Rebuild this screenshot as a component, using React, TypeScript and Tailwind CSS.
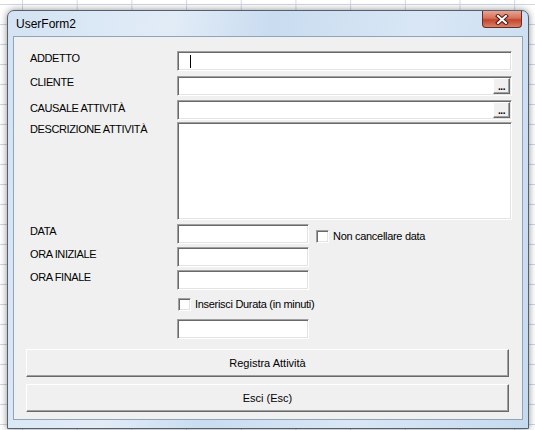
import React from 'react';

// 3D edges used by the form controls
const sunken =
  'border border-t-[#a0a0a0] border-l-[#a0a0a0] border-b-white border-r-white shadow-[inset_1px_1px_0_#696969,inset_-1px_-1px_0_#e3e3e3] bg-white';
const raised =
  'border border-t-white border-l-white border-b-[#696969] border-r-[#696969] shadow-[inset_-1px_-1px_0_#a0a0a0] bg-[#f0f0f0]';

const font = "font-['Liberation_Sans',Arial,sans-serif]";

const Label: React.FC<{ text: string; pt: string }> = ({ text, pt }) => (
  <div className={`w-[163px] shrink-0 pl-[16px] text-[11px] leading-[13px] tracking-[-0.4px] text-black ${pt}`}>
    {text}
  </div>
);

const TextBox: React.FC<{ w?: string; h?: string; caret?: boolean; browse?: boolean }> = ({
  w = 'w-[335px]',
  h = 'h-[20px]',
  caret,
  browse,
}) => (
  <div className={`${sunken} ${w} ${h} flex p-[1px] justify-between`}>
    {caret ? <div className="ml-[11px] mt-[2px] w-px h-[13px] bg-black" /> : <div />}
    {browse && (
      <div className={`${raised} w-[17px] h-[16px] flex items-end justify-center pb-[1px] text-[10px] font-bold leading-none tracking-[-0.5px]`}>
        ...
      </div>
    )}
  </div>
);

const CheckBox: React.FC<{ text: string }> = ({ text }) => (
  <div className="flex items-center gap-[4px]">
    <div className={`${sunken} w-[13px] h-[13px]`} />
    <span className="text-[11px] leading-[13px] tracking-[-0.3px] text-black">{text}</span>
  </div>
);

const CloseGlyph = () => (
  <svg width="14" height="11" viewBox="0 0 14 11">
    <path d="M3 2 L11 9 M11 2 L3 9" stroke="#4a1a14" strokeWidth="4" strokeLinecap="square" />
    <path d="M3 2 L11 9 M11 2 L3 9" stroke="#ffffff" strokeWidth="2" strokeLinecap="square" />
  </svg>
);

export default function App() {
  return (
    <div
      className={`${font} w-[535px] h-[430px] overflow-hidden bg-white bg-[linear-gradient(to_right,#d0d7e5_1px,transparent_1px),linear-gradient(to_bottom,#d0d7e5_1px,transparent_1px)] bg-[size:54.7px_20px] bg-[position:22px_4px] pt-[10px] pl-[7px]`}
    >
      {/* window frame */}
      <div className="w-[522px] h-[419px] rounded-t-[7px] border border-[#55606e] shadow-[0_0_7px_rgba(0,0,0,0.45)] bg-[linear-gradient(100deg,#d3e3f3_0%,#e2ecf7_28%,#c9dcf0_45%,#d9e7f5_70%,#c6daef_100%)] flex flex-col">
        <div className="h-[25px] shrink-0 flex items-center justify-between pl-[8px] pr-[6px]">
          <span className="text-[12px] text-black leading-none">UserForm2</span>
          <div className="self-start w-[40px] h-[17px] rounded-b-[4px] border border-t-0 border-[#6b2a22] bg-[linear-gradient(to_bottom,#e8a493_0%,#d6705a_45%,#c4452c_55%,#d8806a_100%)] flex items-center justify-center">
            <CloseGlyph />
          </div>
        </div>

        {/* client area */}
        <div className="mx-[5px] mb-[8px] flex-1 border border-[#8fa3ba] bg-[#f0f0f0] flex flex-col">
          <div className="flex mt-[14px]">
            <Label text="ADDETTO" pt="pt-[1px]" />
            <TextBox caret />
          </div>
          <div className="flex mt-[5px]">
            <Label text="CLIENTE" pt="pt-0" />
            <TextBox browse />
          </div>
          <div className="flex mt-[4px]">
            <Label text="CAUSALE ATTIVITÀ" pt="pt-[2px]" />
            <TextBox browse />
          </div>
          <div className="flex mt-[2px]">
            <Label text="DESCRIZIONE ATTIVITÀ" pt="pt-[1px]" />
            <TextBox h="h-[98px]" />
          </div>
          <div className="flex mt-[4px]">
            <Label text="DATA" pt="pt-[1px]" />
            <TextBox w="w-[132px]" />
            <div className="ml-[7px] mt-[6px]">
              <CheckBox text="Non cancellare data" />
            </div>
          </div>
          <div className="flex mt-[3px]">
            <Label text="ORA INIZIALE" pt="pt-[1px]" />
            <TextBox w="w-[132px]" />
          </div>
          <div className="flex mt-[3px]">
            <Label text="ORA FINALE" pt="pt-[1px]" />
            <TextBox w="w-[132px]" />
          </div>
          <div className="flex mt-[8px] pl-[164px]">
            <CheckBox text="Inserisci Durata (in minuti)" />
          </div>
          <div className="flex mt-[8px] pl-[163px]">
            <TextBox w="w-[132px]" />
          </div>

          <div className="mt-[10px] ml-[12px] flex flex-col gap-[7px]">
            <button className={`${raised} w-[483px] h-[28px] text-[11px] text-black`}>Registra Attività</button>
            <button className={`${raised} w-[483px] h-[28px] text-[11px] text-black`}>Esci (Esc)</button>
          </div>
        </div>
      </div>
    </div>
  );
}
